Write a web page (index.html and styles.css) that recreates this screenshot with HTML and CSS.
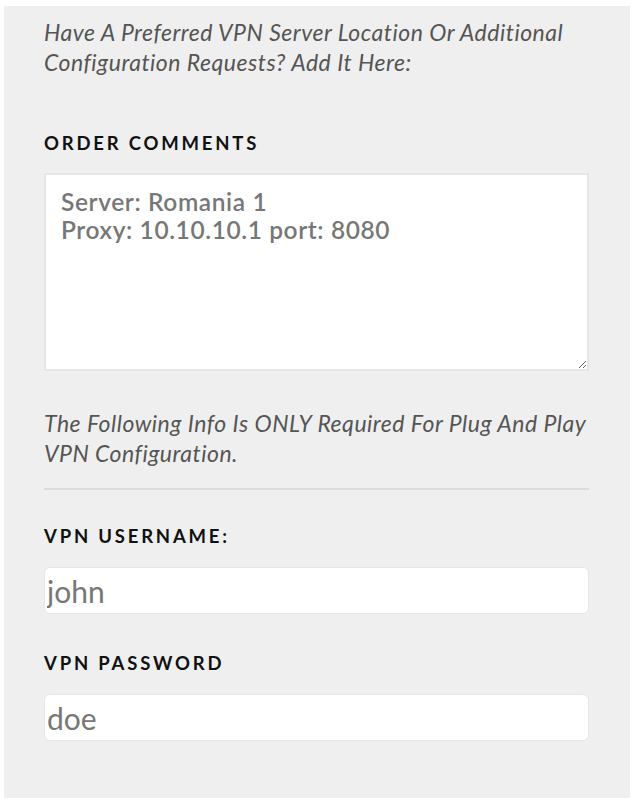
FILE: index.html
```html
<!DOCTYPE html>
<html lang="en">
<head>
  <meta charset="UTF-8" />
  <meta name="viewport" content="width=device-width, initial-scale=1" />
  <title>Checkout - Additional Info</title>
  <link rel="stylesheet" href="styles.css">
</head>
<body>
  <div class="panel">
    <p class="note">Have A Preferred VPN Server Location Or Additional Configuration Requests? Add It Here:</p>

    <label class="field-label" for="order-comments">Order Comments</label>
    <textarea id="order-comments" class="comments">Server: Romania 1
Proxy: 10.10.10.1 port: 8080</textarea>

    <p class="note note-second">The Following Info Is ONLY Required For Plug And Play VPN Configuration.</p>
    <hr class="divider" />

    <label class="field-label" for="vpn-user">VPN Username:</label>
    <input id="vpn-user" class="text-input" type="text" placeholder="john" />

    <label class="field-label" for="vpn-pass">VPN Password</label>
    <input id="vpn-pass" class="text-input" type="text" placeholder="doe" />
  </div>
</body>
</html>
```

FILE: styles.css
```css
body,html{margin:0;padding:0;background:#fff;font-family:'Lato','Open Sans',sans-serif;}
.panel{background:#efefef;margin:6px 2px 0 4px;padding:11px 41px 57px 40px;min-height:791px;box-sizing:border-box;display:flex;flex-direction:column;}
.note{margin:0;font-style:italic;font-size:23px;line-height:30px;letter-spacing:.5px;color:#555;}
.note-second{margin-top:37px;}
.field-label{display:block;font-weight:700;font-size:18.5px;letter-spacing:2.8px;text-transform:uppercase;color:#111;margin:56px 0 0;line-height:20px;}
.comments{display:block;width:100%;height:198px;box-sizing:border-box;margin-top:20px;padding:13px 15px;border:2px solid #e6e6e6;background:#fff;font-family:'Lato',sans-serif;font-weight:600;font-size:24.5px;line-height:28px;letter-spacing:.6px;color:#777;resize:vertical;outline:none;}
.divider{border:0;border-top:2px solid #dcdcdc;margin:20px 0 0;width:100%;}
.divider + .field-label{margin-top:36px;}
.text-input{display:block;width:100%;height:47px;box-sizing:border-box;margin-top:21px;padding:0 2px;border:1px solid #e6e6e6;border-radius:6px;background:#fff;font-family:'Lato',sans-serif;font-size:30px;color:#777;outline:none;}
.text-input::placeholder{color:#777;opacity:1;}
.text-input + .field-label{margin-top:39px;}
```
